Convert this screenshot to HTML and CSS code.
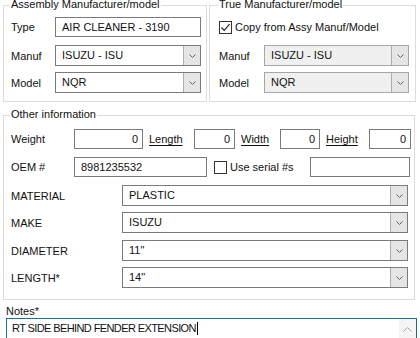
FILE: index.html
```html
<!DOCTYPE html>
<html lang="en">
<head>
    <meta charset="UTF-8">
    <title>Part details</title>
    <link rel="stylesheet" href="styles.css">
</head>
<body>
    <div class="top">
        <fieldset class="group group-assy">
            <legend>Assembly Manufacturer/model</legend>
            <div class="row">
                <span class="label lbl-top">Type</span>
                <div class="field field-top">AIR CLEANER - 3190</div>
            </div>
            <div class="row row-combo gap8">
                <span class="label lbl-top">Manuf</span>
                <div class="combo combo-top">
                    <span class="combo-text">ISUZU - ISU</span>
                    <span class="combo-btn"><svg width="7" height="4" viewBox="0 0 7 4"><path d="M0.5 0.5 L3.5 3.5 L6.5 0.5" fill="none" stroke="#606060"/></svg></span>
                </div>
            </div>
            <div class="row row-combo gap6">
                <span class="label lbl-top">Model</span>
                <div class="combo combo-top">
                    <span class="combo-text">NQR</span>
                    <span class="combo-btn"><svg width="7" height="4" viewBox="0 0 7 4"><path d="M0.5 0.5 L3.5 3.5 L6.5 0.5" fill="none" stroke="#606060"/></svg></span>
                </div>
            </div>
        </fieldset>

        <fieldset class="group group-true">
            <legend>True Manufacturer/model</legend>
            <div class="row">
                <span class="check"><svg width="11" height="11" viewBox="0 0 11 11"><path d="M1.5 5.5 L4.2 8.3 L9.6 2.2" fill="none" stroke="#222" stroke-width="1.2"/></svg></span>
                <span class="check-text">Copy from Assy Manuf/Model</span>
            </div>
            <div class="row row-combo gap8">
                <span class="label lbl-top">Manuf</span>
                <div class="combo combo-top combo-off">
                    <span class="combo-text">ISUZU - ISU</span>
                    <span class="combo-btn"><svg width="7" height="4" viewBox="0 0 7 4"><path d="M0.5 0.5 L3.5 3.5 L6.5 0.5" fill="none" stroke="#606060"/></svg></span>
                </div>
            </div>
            <div class="row row-combo gap6">
                <span class="label lbl-top">Model</span>
                <div class="combo combo-top combo-off">
                    <span class="combo-text">NQR</span>
                    <span class="combo-btn"><svg width="7" height="4" viewBox="0 0 7 4"><path d="M0.5 0.5 L3.5 3.5 L6.5 0.5" fill="none" stroke="#606060"/></svg></span>
                </div>
            </div>
        </fieldset>
    </div>

    <fieldset class="group group-other">
        <legend>Other information</legend>
        <div class="row">
            <span class="label lbl-other">Weight</span>
            <div class="field num w-weight">0</div>
            <span class="link w-link-len">Length</span>
            <div class="field num w-len">0</div>
            <span class="link w-link-wid">Width</span>
            <div class="field num w-wid">0</div>
            <span class="link w-link-hgt">Height</span>
            <div class="field num w-hgt">0</div>
        </div>
        <div class="row gap8">
            <span class="label lbl-other">OEM #</span>
            <div class="field w-oem">8981235532</div>
            <span class="check check-serial"></span>
            <span class="check-text serial-text">Use serial #s</span>
            <div class="field w-serial"></div>
        </div>
        <div class="row row-combo gap8">
            <span class="label lbl-attr">MATERIAL</span>
            <div class="combo combo-attr">
                <span class="combo-text">PLASTIC</span>
                <span class="combo-btn"><svg width="7" height="4" viewBox="0 0 7 4"><path d="M0.5 0.5 L3.5 3.5 L6.5 0.5" fill="none" stroke="#606060"/></svg></span>
            </div>
        </div>
        <div class="row row-combo gap6">
            <span class="label lbl-attr">MAKE</span>
            <div class="combo combo-attr">
                <span class="combo-text">ISUZU</span>
                <span class="combo-btn"><svg width="7" height="4" viewBox="0 0 7 4"><path d="M0.5 0.5 L3.5 3.5 L6.5 0.5" fill="none" stroke="#606060"/></svg></span>
            </div>
        </div>
        <div class="row row-combo gap7">
            <span class="label lbl-attr">DIAMETER</span>
            <div class="combo combo-attr">
                <span class="combo-text">11"</span>
                <span class="combo-btn"><svg width="7" height="4" viewBox="0 0 7 4"><path d="M0.5 0.5 L3.5 3.5 L6.5 0.5" fill="none" stroke="#606060"/></svg></span>
            </div>
        </div>
        <div class="row row-combo gap6">
            <span class="label lbl-attr">LENGTH*</span>
            <div class="combo combo-attr">
                <span class="combo-text">14"</span>
                <span class="combo-btn"><svg width="7" height="4" viewBox="0 0 7 4"><path d="M0.5 0.5 L3.5 3.5 L6.5 0.5" fill="none" stroke="#606060"/></svg></span>
            </div>
        </div>
    </fieldset>

    <div class="notes">
        <div class="notes-label">Notes*</div>
        <div class="notes-box">
            <div class="notes-text">RT SIDE BEHIND FENDER EXTENSION<span class="caret"></span></div>
            <div class="scroll">
                <svg width="9" height="5" viewBox="0 0 9 5"><path d="M0.5 4.5 L4.5 0.5 L8.5 4.5" fill="none" stroke="#a8a8a8"/></svg>
            </div>
        </div>
    </div>
</body>
</html>
```

FILE: styles.css
```css
body {
    margin: 0;
    padding: 0;
    background-color: #fff;
    font-family: "Liberation Sans", Arial, sans-serif;
    font-size: 11px;
    color: #111;
    overflow: hidden;
    width: 420px;
    height: 338px;
}

/* group boxes */

.top {
    display: flex;
    gap: 2px;
    margin: -3px 0 0 3px;
}

.group {
    margin: 0;
    border: 1px solid #dcdcdc;
    padding: 4px 5px 8px 7px;
    min-width: 0;
}

.group legend {
    margin-left: -1px;
    padding: 0 1px 2px;
    line-height: 14px;
}

.group-assy {
    width: 204px;
    box-sizing: border-box;
}

.group-true {
    width: 207px;
    box-sizing: border-box;
    padding-left: 9px;
}

.group-other {
    width: 412px;
    box-sizing: border-box;
    margin: 5px 0 0 3px;
    padding: 6px 5px 11px 7px;
}

/* rows */

.row {
    display: flex;
    align-items: center;
    height: 20px;
}

.row-combo {
    height: 21px;
}

.gap6 { margin-top: 6px; }
.gap7 { margin-top: 7px; }
.gap8 { margin-top: 8px; }

.label {
    flex: none;
}

.lbl-top { width: 44px; }
.lbl-other { width: 63px; }
.lbl-attr { width: 111px; }

.group-true .lbl-top { width: 45px; }

/* text boxes */

.field {
    box-sizing: border-box;
    height: 20px;
    border: 1px solid #7a7a7a;
    background-color: #fff;
    padding: 0 4px 0 6px;
    line-height: 18px;
    white-space: nowrap;
    overflow: hidden;
    flex: none;
}

.field.num {
    text-align: right;
}

.field-top { width: 146px; }
.w-weight { width: 69px; }
.w-len { width: 41px; }
.w-wid { width: 40px; }
.w-hgt { width: 42px; }
.w-oem { width: 133px; }
.w-serial { width: 100px; }

.link {
    text-decoration: underline;
    text-underline-offset: 2px;
    padding-left: 6px;
    box-sizing: border-box;
    flex: none;
}

.w-link-len { width: 51px; }
.w-link-wid { width: 45px; }
.w-link-hgt { width: 49px; }

/* combo boxes */

.combo {
    box-sizing: border-box;
    height: 21px;
    display: flex;
    border: 1px solid #7a7a7a;
    background-color: #fff;
    flex: none;
}

.combo-top { width: 146px; }
.group-true .combo-top { width: 145px; }
.combo-attr { width: 286px; }

.combo-off {
    border-color: #a6a6a6;
    background-color: #f0f0f0;
}

.combo-text {
    flex: 1;
    padding-left: 6px;
    line-height: 19px;
    white-space: nowrap;
}

.combo-btn {
    width: 16px;
    display: flex;
    align-items: center;
    justify-content: center;
    background-color: #e5e5e5;
    border-left: 1px solid #adadad;
}

/* check boxes */

.check {
    box-sizing: border-box;
    width: 13px;
    height: 13px;
    border: 1px solid #333;
    background-color: #fff;
    display: flex;
    align-items: center;
    justify-content: center;
    flex: none;
}

.check-text {
    padding-left: 3px;
    white-space: nowrap;
}

.check-serial {
    margin-left: 7px;
}

.serial-text {
    width: 80px;
    flex: none;
}

/* notes */

.notes {
    margin-top: 5px;
    padding-left: 6px;
}

.notes-label {
    line-height: 13px;
}

.notes-box {
    box-sizing: border-box;
    width: 411px;
    height: 60px;
    border: 1px solid #1f6f93;
    display: flex;
}

.notes-text {
    flex: 1;
    padding: 2px 0 0 5px;
    line-height: 14px;
    letter-spacing: -0.6px;
    white-space: nowrap;
}

.caret {
    display: inline-block;
    width: 0;
    height: 13px;
    margin-left: 1px;
    border-left: 1px solid #000;
    vertical-align: -3px;
}

.scroll {
    width: 17px;
    background-color: #f5f5f5;
    display: flex;
    justify-content: center;
    padding-top: 8px;
    box-sizing: border-box;
}
```
